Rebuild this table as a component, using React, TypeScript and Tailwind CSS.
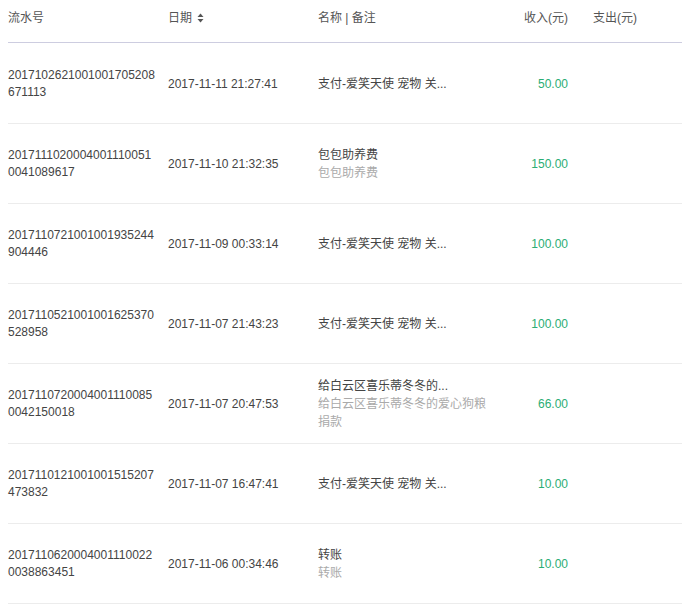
const rows = [
  { no: ["2017102621001001705208", "671113"], date: "2017-11-11 21:27:41", name: "支付-爱笑天使 宠物 关...", note: [], income: "50.00" },
  { no: ["2017111020004001110051", "0041089617"], date: "2017-11-10 21:32:35", name: "包包助养费", note: ["包包助养费"], income: "150.00" },
  { no: ["2017110721001001935244", "904446"], date: "2017-11-09 00:33:14", name: "支付-爱笑天使 宠物 关...", note: [], income: "100.00" },
  { no: ["2017110521001001625370", "528958"], date: "2017-11-07 21:43:23", name: "支付-爱笑天使 宠物 关...", note: [], income: "100.00" },
  { no: ["2017110720004001110085", "0042150018"], date: "2017-11-07 20:47:53", name: "给白云区喜乐蒂冬冬的...", note: ["给白云区喜乐蒂冬冬的爱心狗粮", "捐款"], income: "66.00" },
  { no: ["2017110121001001515207", "473832"], date: "2017-11-07 16:47:41", name: "支付-爱笑天使 宠物 关...", note: [], income: "10.00" },
  { no: ["2017110620004001110022", "0038863451"], date: "2017-11-06 00:34:46", name: "转账", note: ["转账"], income: "10.00" },
];

const cols = "grid grid-cols-[160px_150px_180px_70px_1fr] items-center";

function SortIcon() {
  return (
    <svg width="7" height="10" viewBox="0 0 7 10" className="ml-[5px]">
      <path d="M3.5 0.5 L6.5 4 L0.5 4 Z" fill="#555" />
      <path d="M3.5 9.5 L6.5 6 L0.5 6 Z" fill="#555" />
    </svg>
  );
}

export default function App() {
  return (
    <div className="bg-white pl-2 font-['Liberation_Sans','Noto_Sans_CJK_SC',sans-serif] text-[12px] leading-[18px] text-[#444]">
      <div className={`${cols} h-[43px] items-start border-b border-[#cdcde0] pt-[9px] text-[#555]`}>
        <div>流水号</div>
        <div className="flex items-center">日期<SortIcon /></div>
        <div>名称 | 备注</div>
        <div className="text-right">收入(元)</div>
        <div className="pl-[25px]">支出(元)</div>
      </div>
      {rows.map((r, i) => (
        <div key={i} className={`${cols} border-b border-[#ececec] ${i === 0 ? "h-[81px] pt-px" : "h-[80px]"}`}>
          <div className="leading-[17px]">
            {r.no.map((l) => (
              <div key={l}>{l}</div>
            ))}
          </div>
          <div>{r.date}</div>
          <div>
            <div>{r.name}</div>
            {r.note.map((n) => (
              <div key={n} className="text-[#aaa]">{n}</div>
            ))}
          </div>
          <div className="text-right text-[#2bad74]">{r.income}</div>
          <div />
        </div>
      ))}
    </div>
  );
}
